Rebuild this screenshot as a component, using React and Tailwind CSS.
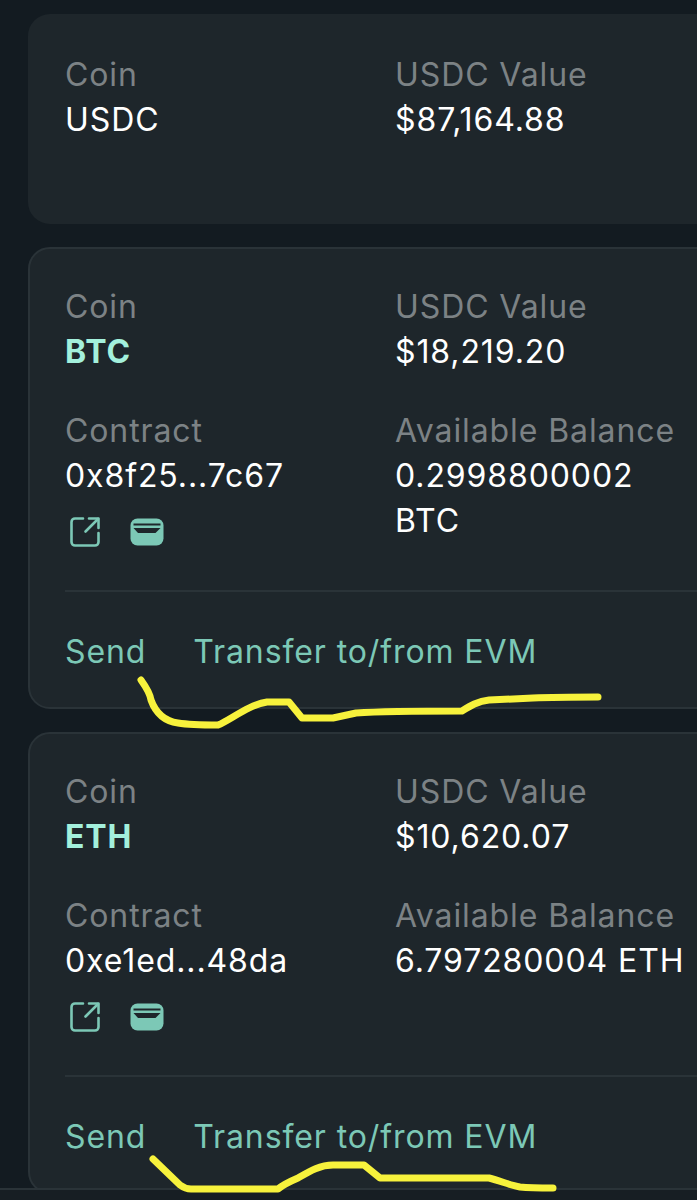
function ShareIcon() {
  return (
    <svg width="32" height="32" viewBox="0 0 32 32" fill="none" stroke="#7cc8b6" strokeWidth="2.6" strokeLinecap="round" strokeLinejoin="round">
      <path d="M14 2.500H6a3.500 3.500 0 0 0-3.500 3.500v20A3.500 3.500 0 0 0 6 29.500h20a3.500 3.500 0 0 0 3.500-3.500v-9" />
      <path d="M20 2.500h9.500V12" />
      <path d="M29 3 16.500 15.500" />
    </svg>
  );
}

function WalletIcon() {
  return (
    <svg width="34" height="28" viewBox="0 0 34 28">
      <rect x="0.500" y="0.500" width="33" height="27" rx="7" fill="#7cc8b6" />
      <rect x="3.500" y="5.500" width="27" height="2" fill="#1e262b" />
      <path d="M3.500 10h27l-5 5H8z" fill="#1e262b" />
    </svg>
  );
}

function Field({ label, children, bold }) {
  return (
    <div>
      <div className="text-[#7c8285]">{label}</div>
      <div className={bold ? "font-bold text-[#a3f0dc]" : "text-white"}>{children}</div>
    </div>
  );
}

function TokenCard({ coin, usd, contract, balance }) {
  return (
    <div className="w-[760px] rounded-[22px] border-2 border-[#2a3338] bg-[#1e262b] px-[35px] pt-[35px]">
      <div className="grid grid-cols-[330px_1fr] gap-y-[34px]">
        <Field label="Coin" bold>{coin}</Field>
        <Field label="USDC Value">{usd}</Field>
        <div>
          <Field label="Contract">{contract}</Field>
          <div className="mt-[18px] flex items-center gap-[29px] pl-[4px]">
            <ShareIcon />
            <WalletIcon />
          </div>
        </div>
        <div className="w-[300px]">
          <Field label="Available Balance">{balance}</Field>
        </div>
      </div>
      <div className="mt-[42px] border-t-2 border-[#2a3338] pb-[33px] pt-[37px]">
        <div className="flex gap-[47px] text-[#7cc8b6]">
          <span>Send</span>
          <span>Transfer to/from EVM</span>
        </div>
      </div>
    </div>
  );
}

export default function App() {
  return (
    <div className="relative h-[1200px] w-[697px] overflow-hidden bg-[#131b21] pl-[28px] pt-[14px] font-['Inter',sans-serif] text-[32px] leading-[45px] tracking-[0.9px]">
      <div className="flex flex-col gap-[23px]">
        <div className="h-[210px] w-[760px] rounded-[22px] bg-[#1e262b] px-[37px] pt-[38px]">
          <div className="grid grid-cols-[330px_1fr]">
            <Field label="Coin">USDC</Field>
            <Field label="USDC Value">$87,164.88</Field>
          </div>
        </div>
        <TokenCard coin="BTC" usd="$18,219.20" contract="0x8f25...7c67" balance="0.2998800002 BTC" />
        <TokenCard coin="ETH" usd="$10,620.07" contract="0xe1ed...48da" balance={<span className="whitespace-nowrap">6.797280004 ETH</span>} />
      </div>
      <div className="absolute bottom-0 left-0 h-[12px] w-full border-t-2 border-[#2a3338] bg-[#171e23]" />
      <svg className="absolute left-0 top-0" width="697" height="1200" fill="none" stroke="#f7f23c" strokeWidth="7" strokeLinecap="round" strokeLinejoin="round">
        <path d="M141 680c5 7 9 13 10 20 4 11 12 21 27 23 12 2 28 2 40 2 14-6 30-20 49-23h22l13 16h31l23-5c30-2 70-2 106-2 8-5 16-10 27-11 22-1 44-2 44-2 22-1 43-1 65-1" />
        <path d="M153 1159l27 26c4 3 7 4 11 4h87c6-5 13-8 20-11 12-7 22-13 35-13h31l16 13h109c12 3 20 7 31 9 10 1 22 1 33 1" />
      </svg>
    </div>
  );
}
